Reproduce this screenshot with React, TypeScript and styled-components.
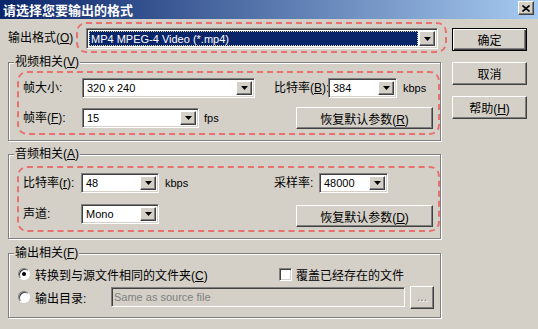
import React from "react";
import styled, { createGlobalStyle } from "styled-components";

const Global = createGlobalStyle`
  html, body { margin: 0; padding: 0; background: #d4d0c8; }
  body {
    font-family: "Liberation Sans", "Noto Sans CJK SC", sans-serif;
    font-size: 12px;
    color: #000;
  }
  * { box-sizing: border-box; }
`;

const raised = `
  border: 1px solid;
  border-color: #ffffff #404040 #404040 #ffffff;
  box-shadow: inset -1px -1px 0 #808080, inset 1px 1px 0 #d4d0c8;
  background: #d4d0c8;
`;

const sunken = `
  border: 1px solid;
  border-color: #808080 #ffffff #ffffff #808080;
  box-shadow: inset 1px 1px 0 #404040, inset -1px -1px 0 #d4d0c8;
`;

const Window = styled.div`
  width: 538px;
  height: 329px;
  background: #d4d0c8;
  display: flex;
  flex-direction: column;
  overflow: hidden;
`;

const TitleBar = styled.div`
  height: 19px;
  flex: none;
  display: flex;
  align-items: center;
  justify-content: space-between;
  padding: 0 4px 0 3px;
  background: linear-gradient(to right, #0a246a, #a6caf0);
`;

const TitleText = styled.span`
  color: #fff;
  font-weight: bold;
  font-size: 13px;
  line-height: 19px;
  font-family: "Noto Sans CJK SC", sans-serif;
`;

const CloseButton = styled.div`
  width: 16px;
  height: 14px;
  margin-top: -3px;
  ${raised}
  display: flex;
  align-items: center;
  justify-content: center;
`;

const Body = styled.div`
  flex: 1;
  display: flex;
`;

const LeftCol = styled.div`
  width: 452px;
  flex: none;
  display: flex;
  flex-direction: column;
`;

const RightCol = styled.div`
  width: 75px;
  flex: none;
  display: flex;
  flex-direction: column;
  gap: 11px;
  padding-top: 9px;
`;

const FormatRow = styled.div`
  display: flex;
  align-items: center;
  margin-top: 3px;
  padding-left: 8px;
`;

const Label = styled.span<{ $w?: number; $ml?: number }>`
  flex: none;
  width: ${(p) => (p.$w ? `${p.$w}px` : "auto")};
  margin-left: ${(p) => p.$ml ?? 0}px;
  white-space: nowrap;
  line-height: 20px;
`;

const Unit = styled.span<{ $w?: number; $ml?: number }>`
  flex: none;
  width: ${(p) => (p.$w ? `${p.$w}px` : "auto")};
  margin-left: ${(p) => p.$ml ?? 0}px;
  font-size: 11px;
  line-height: 20px;
  white-space: nowrap;
`;

const Acc = styled.span`
  text-decoration: underline;
`;

const DashedBox = styled.div<{ $w: number; $mt?: number; $ml?: number; $pad: string }>`
  width: ${(p) => p.$w}px;
  margin-top: ${(p) => p.$mt ?? 0}px;
  margin-left: ${(p) => p.$ml ?? 0}px;
  border: 2px dashed #e8706e;
  border-radius: 10px;
  padding: ${(p) => p.$pad};
  display: flex;
  flex-direction: column;
`;

const Row = styled.div<{ $mt?: number; $top?: boolean }>`
  display: flex;
  align-items: ${(p) => (p.$top ? "flex-start" : "center")};
  margin-top: ${(p) => p.$mt ?? 0}px;
  padding: 0 5px 0 4px;
`;

const ComboBox = styled.div<{ $w: number; $h?: number }>`
  flex: none;
  width: ${(p) => p.$w}px;
  height: ${(p) => p.$h ?? 20}px;
  ${sunken}
  background: #fff;
  display: flex;
  padding: 2px;
`;

const ComboText = styled.div<{ $selected?: boolean }>`
  flex: 1;
  display: flex;
  align-items: center;
  font-size: 11px;
  padding-left: ${(p) => (p.$selected ? 1 : 2)}px;
  white-space: nowrap;
  overflow: hidden;
  background: ${(p) => (p.$selected ? "#0a246a" : "transparent")};
  color: ${(p) => (p.$selected ? "#fff" : "#000")};
  border: ${(p) => (p.$selected ? "1px dotted #d8d8a8" : "none")};
  margin-right: ${(p) => (p.$selected ? 1 : 0)}px;
`;

const DropButton = styled.div`
  width: 16px;
  flex: none;
  ${raised}
  display: flex;
  align-items: center;
  justify-content: center;
`;

const Button = styled.button<{ $w: number; $h: number; $default?: boolean; $ml?: string; $mt?: number; $disabled?: boolean }>`
  flex: none;
  width: ${(p) => p.$w}px;
  height: ${(p) => p.$h}px;
  margin: ${(p) => p.$mt ?? 0}px 0 0 ${(p) => p.$ml ?? "0"};
  padding: 0;
  font-family: "Liberation Sans", "Noto Sans CJK SC", sans-serif;
  font-size: 12px;
  color: ${(p) => (p.$disabled ? "#808080" : "#000")};
  text-shadow: ${(p) => (p.$disabled ? "1px 1px 0 #fff" : "none")};
  background: #d4d0c8;
  ${(p) =>
    p.$default
      ? `border: 1px solid #000;
         box-shadow: inset 1px 1px 0 #fff, inset -1px -1px 0 #404040, inset -2px -2px 0 #808080;`
      : raised}
  display: flex;
  align-items: center;
  justify-content: center;
  cursor: default;
`;

const Group = styled.div<{ $mt: number; $pb: number }>`
  width: 433px;
  margin: ${(p) => p.$mt}px 0 0 8px;
  border: 1px solid #808080;
  box-shadow: inset 1px 1px 0 #fff, 1px 1px 0 #fff;
  padding-bottom: ${(p) => p.$pb}px;
`;

const GroupTitle = styled.div`
  width: fit-content;
  margin: -8px 0 0 5px;
  padding: 0 1px;
  height: 14px;
  line-height: 14px;
  background: #d4d0c8;
  white-space: nowrap;
`;

const OptRow = styled.div<{ $mt: number; $h: number }>`
  display: flex;
  align-items: center;
  height: ${(p) => p.$h}px;
  margin-top: ${(p) => p.$mt}px;
  padding-left: 9px;
`;

const OptItem = styled.label<{ $w?: number; $gap: number }>`
  flex: none;
  width: ${(p) => (p.$w ? `${p.$w}px` : "auto")};
  display: flex;
  align-items: center;
  gap: ${(p) => p.$gap}px;
  white-space: nowrap;
`;

const OptText = styled.span`
  white-space: nowrap;
`;

const Radio = styled.span<{ $checked?: boolean }>`
  flex: none;
  width: 12px;
  height: 12px;
  border-radius: 50%;
  border: 1px solid;
  border-color: #808080 #ffffff #ffffff #808080;
  box-shadow: inset 1px 1px 0 #404040;
  background: #fff;
  display: flex;
  align-items: center;
  justify-content: center;
  &::after {
    content: "";
    width: 4px;
    height: 4px;
    border-radius: 50%;
    background: ${(p) => (p.$checked ? "#000" : "transparent")};
  }
`;

const Check = styled.span`
  flex: none;
  width: 13px;
  height: 13px;
  ${sunken}
  background: #fff;
`;

const TextField = styled.div<{ $w: number }>`
  flex: none;
  width: ${(p) => p.$w}px;
  height: 20px;
  ${sunken}
  background: #d4d0c8;
  color: #808080;
  font-size: 11px;
  display: flex;
  align-items: center;
  padding-left: 2px;
  white-space: nowrap;
`;

const Arrow = () => (
  <svg width="7" height="4" viewBox="0 0 7 4">
    <polygon points="0,0 7,0 3.5,4" fill="#000" />
  </svg>
);

const CloseX = () => (
  <svg width="8" height="7" viewBox="0 0 8 7">
    <path d="M0.5 0.5 L7.5 6.5 M7.5 0.5 L0.5 6.5" stroke="#000" strokeWidth="1.6" fill="none" />
  </svg>
);

const Combo: React.FC<{ w: number; h?: number; value: string; selected?: boolean }> = ({ w, h, value, selected }) => (
  <ComboBox $w={w} $h={h}>
    <ComboText $selected={selected}>{value}</ComboText>
    <DropButton>
      <Arrow />
    </DropButton>
  </ComboBox>
);

export default function App() {
  return (
    <>
      <Global />
      <Window>
        <TitleBar>
          <TitleText>请选择您要输出的格式</TitleText>
          <CloseButton>
            <CloseX />
          </CloseButton>
        </TitleBar>
        <Body>
          <LeftCol>
            <FormatRow>
              <Label $w={68}>
                输出格式(<Acc>O</Acc>)
              </Label>
              <DashedBox $w={371} $pad="4px 7px 2px 8px">
                <Combo w={352} h={21} value="MP4 MPEG-4 Video (*.mp4)" selected />
              </DashedBox>
            </FormatRow>

            <Group $mt={9} $pb={5}>
              <GroupTitle>
                视频相关(<Acc>V</Acc>)
              </GroupTitle>
              <DashedBox $w={423} $mt={2} $ml={8} $pad="5px 0 4px 0">
                <Row>
                  <Label $w={59}>帧大小:</Label>
                  <Combo w={173} value="320 x 240" />
                  <Label $w={54} $ml={19}>
                    比特率(<Acc>B</Acc>):
                  </Label>
                  <Combo w={69} value="384" />
                  <Unit $ml={6}>kbps</Unit>
                </Row>
                <Row $mt={9}>
                  <Label $w={59}>
                    帧率(<Acc>F</Acc>):
                  </Label>
                  <Combo w={117} value="15" />
                  <Unit $ml={5}>fps</Unit>
                  <Button $w={137} $h={22} $ml="auto">
                    <span>
                      恢复默认参数(<Acc>R</Acc>)
                    </span>
                  </Button>
                </Row>
              </DashedBox>
            </Group>

            <Group $mt={13} $pb={6}>
              <GroupTitle>
                音频相关(<Acc>A</Acc>)
              </GroupTitle>
              <DashedBox $w={423} $mt={5} $ml={8} $pad="5px 0 3px 0">
                <Row>
                  <Label $w={58}>
                    比特率(<Acc>r</Acc>):
                  </Label>
                  <Combo w={78} value="48" />
                  <Unit $ml={6} $w={109}>
                    kbps
                  </Unit>
                  <Label $w={45}>采样率:</Label>
                  <Combo w={69} value="48000" />
                </Row>
                <Row $mt={11} $top>
                  <Label $w={58}>声道:</Label>
                  <Combo w={78} value="Mono" />
                  <Button $w={137} $h={22} $ml="auto" $mt={1}>
                    <span>
                      恢复默认参数(<Acc>D</Acc>)
                    </span>
                  </Button>
                </Row>
              </DashedBox>
            </Group>

            <Group $mt={14} $pb={8}>
              <GroupTitle>
                输出相关(<Acc>F</Acc>)
              </GroupTitle>
              <OptRow $mt={6} $h={16}>
                <OptItem $w={261} $gap={5}>
                  <Radio $checked />
                  <OptText>
                    转换到与源文件相同的文件夹(<Acc>C</Acc>)
                  </OptText>
                </OptItem>
                <OptItem $gap={4}>
                  <Check />
                  <OptText>覆盖已经存在的文件</OptText>
                </OptItem>
              </OptRow>
              <OptRow $mt={3} $h={24}>
                <OptItem $w={93} $gap={5}>
                  <Radio />
                  <OptText>输出目录:</OptText>
                </OptItem>
                <TextField $w={294}>Same as source file</TextField>
                <Button $w={24} $h={23} $ml="5px" $disabled>
                  ...
                </Button>
              </OptRow>
            </Group>
          </LeftCol>

          <RightCol>
            <Button $w={75} $h={23} $default>
              确定
            </Button>
            <Button $w={75} $h={23}>
              取消
            </Button>
            <Button $w={75} $h={23}>
              <span>
                帮助(<Acc>H</Acc>)
              </span>
            </Button>
          </RightCol>
        </Body>
      </Window>
    </>
  );
}
